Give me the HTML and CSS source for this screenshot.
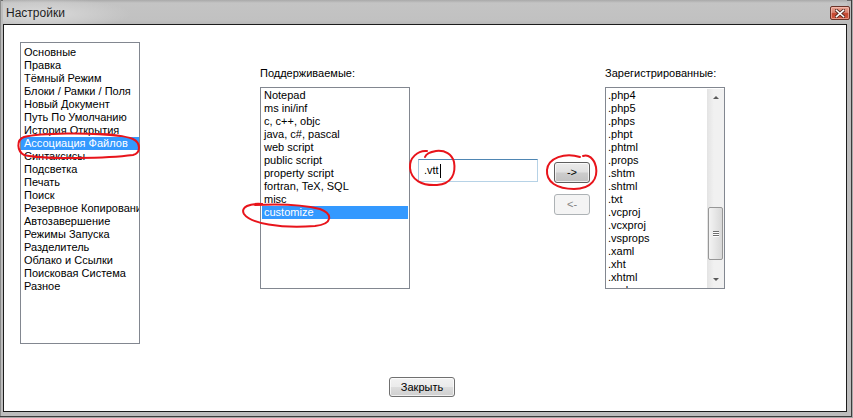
FILE: index.html
```html
<!DOCTYPE html>
<html lang="ru">
<head>
<meta charset="utf-8">
<title>Настройки</title>
<link rel="stylesheet" href="styles.css">
</head>
<body>
<div class="window">
  <div class="titlebar">
    <span class="title">Настройки</span>
    <div class="close-box">
      <svg width="10" height="9" viewBox="0 0 10 9"><path d="M1.5 1.5 L8.5 7.5 M8.5 1.5 L1.5 7.5" stroke="#5a2a20" stroke-width="3.4" stroke-linecap="square"/><path d="M1.5 1.5 L8.5 7.5 M8.5 1.5 L1.5 7.5" stroke="#ffffff" stroke-width="1.6" stroke-linecap="square"/></svg>
    </div>
  </div>
  <div class="client">
    <div class="main">
      <ul class="list list-left">
        <li>Основные</li>
        <li>Правка</li>
        <li>Тёмный Режим</li>
        <li>Блоки / Рамки / Поля</li>
        <li>Новый Документ</li>
        <li>Путь По Умолчанию</li>
        <li>История Открытия</li>
        <li class="sel">Ассоциация Файлов</li>
        <li>Синтаксисы</li>
        <li>Подсветка</li>
        <li>Печать</li>
        <li>Поиск</li>
        <li>Резервное Копирование</li>
        <li>Автозавершение</li>
        <li>Режимы Запуска</li>
        <li>Разделитель</li>
        <li>Облако и Ссылки</li>
        <li>Поисковая Система</li>
        <li>Разное</li>
      </ul>
      <div class="col col-mid">
        <div class="label">Поддерживаемые:</div>
        <ul class="list list-mid">
          <li>Notepad</li>
          <li>ms ini/inf</li>
          <li>c, c++, objc</li>
          <li>java, c#, pascal</li>
          <li>web script</li>
          <li>public script</li>
          <li>property script</li>
          <li>fortran, TeX, SQL</li>
          <li>misc</li>
          <li class="sel">customize</li>
        </ul>
      </div>
      <div class="entry">
        <div class="textbox">.vtt<span class="caret"></span></div>
      </div>
      <div class="buttons">
        <button class="btn btn-focus">-&gt;</button>
        <button class="btn btn-disabled">&lt;-</button>
      </div>
      <div class="col col-right">
        <div class="label">Зарегистрированные:</div>
        <div class="list list-right">
          <ul class="items">
            <li>.php4</li>
            <li>.php5</li>
            <li>.phps</li>
            <li>.phpt</li>
            <li>.phtml</li>
            <li>.props</li>
            <li>.shtm</li>
            <li>.shtml</li>
            <li>.txt</li>
            <li>.vcproj</li>
            <li>.vcxproj</li>
            <li>.vsprops</li>
            <li>.xaml</li>
            <li>.xht</li>
            <li>.xhtml</li>
            <li>.xml</li>
          </ul>
          <div class="scrollbar">
            <div class="arrow arrow-up"></div>
            <div class="track">
              <div class="thumb"><span></span><span></span><span></span></div>
            </div>
            <div class="arrow arrow-down"></div>
          </div>
        </div>
      </div>
    </div>
    <div class="footer">
      <button class="btn btn-close">Закрыть</button>
    </div>
  </div>
  <svg class="marks" width="853" height="418" viewBox="0 0 853 418">
    <g fill="none" stroke="#e8141b" stroke-width="2" stroke-linecap="round" stroke-linejoin="round">
      <path d="M120 136 C90 132 40 133 24 137 C16 140 17 151 24 155 C45 160 110 158 133 155 C141 153 141 143 133 139 C125 136 110 134 100 134"/>
      <path d="M262 204 C250 203 240 207 244 214 C250 223 280 229 315 226 C333 224 333 214 320 209 C300 204 275 204 255 205"/>
      <path d="M427 151 C418 150 409 158 410 168 C411 180 422 186 437 185 C452 184 456 173 454 162 C452 154 445 150 436 151 C430 152 426 154 425 157"/>
      <path d="M580 157 C565 152 548 158 547 170 C546 182 557 189 574 189 C592 189 598 178 596 167 C594 158 588 154 583 156"/>
    </g>
  </svg>
</div>
</body>
</html>
```
FILE: styles.css
```css
* { box-sizing: border-box; }
html, body { margin: 0; padding: 0; }
body {
  width: 853px;
  height: 418px;
  overflow: hidden;
  background: #ffffff;
  font-family: "Liberation Sans", Arial, sans-serif;
  font-size: 11px;
  color: #000;
}
.window {
  position: relative;
  width: 853px;
  height: 418px;
  padding: 0 6px 6px 3px;
  background: #bdbdbd;
  box-shadow: inset -1px -1px 0 #a8a8a8, inset -2px -2px 0 #3c3c3c, inset 1px 0 0 #8a8a8a, inset 0 1px 0 #6a6a6a;
  display: flex;
  flex-direction: column;
}
.titlebar {
  height: 24px;
  flex: none;
  display: flex;
  align-items: center;
  justify-content: space-between;
  padding: 2px 0 0 3px;
  background: radial-gradient(ellipse 90px 16px at 38px 14px, #dcdcdc 0%, #d0d0d0 40%, rgba(200,200,200,0) 100%), linear-gradient(#a9a9a9 0px, #c4c4c4 3px, #c1c1c1 20px, #b9b9b9 24px);
  position: relative;
}
.title {
  font-size: 12px;
  color: #1e1e1e;
  padding-left: 0;
}
.close-box {
  position: absolute;
  left: 827px;
  top: 6px;
  width: 20px;
  height: 14px;
  border: 1px solid #6a3328;
  border-radius: 2px;
  background: linear-gradient(#e8a493 0%, #d98270 45%, #c4462f 55%, #d2583f 100%);
  display: flex;
  align-items: center;
  justify-content: center;
  box-shadow: inset 0 0 0 1px rgba(255,210,200,0.5);
}
.close-box svg { display: block; }
.client {
  flex: 1;
  background: #ffffff;
  border: 1px solid #1c1c1c;
  display: flex;
  flex-direction: column;
}
.main {
  display: flex;
  align-items: flex-start;
  padding: 17px 0 0 16px;
}
.list {
  list-style: none;
  margin: 0;
  background: #fff;
  border: 1px solid #828790;
  overflow: hidden;
}
.list li {
  height: 13px;
  line-height: 13px;
  white-space: nowrap;
  overflow: hidden;
}
.list li.sel {
  background: #3399ff;
  color: #ffffff;
}
.list-left {
  width: 120px;
  height: 302px;
  padding: 3px 0 0 0;
}
.list-left li { padding-left: 3px; }
.col { display: flex; flex-direction: column; }
.col-mid { margin: 25px 0 0 120px; }
.label {
  line-height: 13px;
  height: 13px;
  margin-bottom: 7px;
  color: #000;
}
.list-mid {
  width: 150px;
  height: 202px;
  padding: 1px 1px 0 1px;
}
.list-mid li { padding-left: 2px; }
.entry { margin: 117px 0 0 8px; }
.textbox {
  width: 120px;
  height: 23px;
  border: 1px solid #b6d2e6;
  border-top-color: #4f86b3;
  border-left-color: #a6c6de;
  padding: 0 0 0 5px;
  display: flex;
  align-items: center;
  line-height: 13px;
  font-size: 11px;
}
.caret {
  display: inline-block;
  width: 1px;
  height: 14px;
  background: #000;
  margin-left: 1px;
}
.buttons {
  margin: 120px 0 0 16px;
  display: flex;
  flex-direction: column;
  gap: 11px;
}
.btn {
  font-family: "Liberation Sans", Arial, sans-serif;
  font-size: 11px;
  color: #000;
  margin: 0;
  padding: 0;
  border: 1px solid #707070;
  border-radius: 3px;
  background: linear-gradient(#f2f2f2 0%, #ebebeb 49%, #dddddd 51%, #cfcfcf 100%);
  box-shadow: inset 0 0 0 1px rgba(255,255,255,0.7);
  line-height: 13px;
}
.buttons .btn { width: 36px; height: 21px; }
.btn-focus {
  border-color: #5e5e5e;
  background: linear-gradient(#ebebeb 0%, #e0e0e0 49%, #cdcdcd 51%, #c2c2c2 100%);
}
.btn-disabled {
  border-color: #adb2b5;
  background: #f4f4f4;
  color: #838383;
  box-shadow: none;
}
.col-right { margin: 25px 0 0 15px; }
.list-right {
  width: 120px;
  height: 202px;
  padding: 1px 0 0 1px;
  display: flex;
}
.items {
  list-style: none;
  margin: 0;
  padding: 0;
  flex: 1;
  overflow: hidden;
  height: 200px;
}
.items li { padding-left: 1px; }
.scrollbar {
  width: 17px;
  height: 199px;
  flex: none;
  display: flex;
  flex-direction: column;
  background: linear-gradient(90deg, #e3e3e3, #f1f1f1 40%, #f1f1f1);
}
.arrow {
  height: 17px;
  flex: none;
  position: relative;
}
.arrow::after {
  content: "";
  position: absolute;
  left: 6px;
  width: 0;
  height: 0;
  border-left: 3px solid transparent;
  border-right: 3px solid transparent;
}
.arrow-up::after { top: 7px; border-bottom: 3px solid #5a5a5a; }
.arrow-down::after { top: 7px; border-top: 3px solid #5a5a5a; }
.track {
  flex: 1;
  padding-top: 101px;
}
.thumb {
  width: 15px;
  height: 53px;
  margin-left: 1px;
  border: 1px solid #979797;
  border-radius: 2px;
  background: linear-gradient(90deg, #f3f3f3, #e6e6e6 50%, #d8d8d8);
  display: flex;
  flex-direction: column;
  align-items: center;
  justify-content: center;
  gap: 1px;
}
.thumb span {
  display: block;
  width: 6px;
  height: 1px;
  background: #6e6e6e;
  box-shadow: 0 1px 0 #ffffff;
}
.footer {
  padding: 33px 0 0 385px;
}
.btn-close { width: 66px; height: 20px; }
.marks {
  position: absolute;
  left: 0;
  top: 0;
  pointer-events: none;
}
```
